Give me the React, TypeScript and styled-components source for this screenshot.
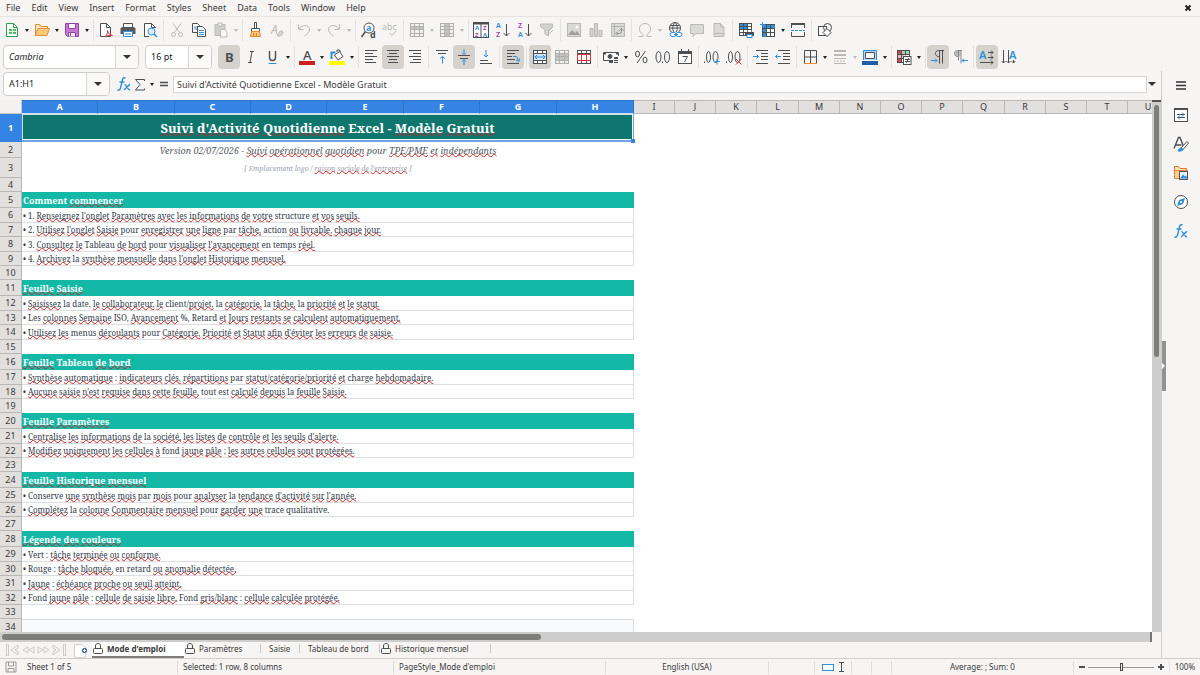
import React, { Fragment, ReactNode } from "react";
import styled, { createGlobalStyle, css } from "styled-components";

const ink = "#4b4f52";
const dim = "#b9b9b8";
const blue = "#2f8fd8";
const select = "#3584e4";

const GlobalStyle = createGlobalStyle`
  * { box-sizing: border-box; }
  html, body { margin: 0; height: 100%; }
  body {
    background: #f6f5f4;
    color: #3a3a3a;
    font-family: "Noto Sans", "Open Sans", sans-serif;
    font-size: 9px;
    line-height: 12px;
    overflow: hidden;
  }
  button, input { font: inherit; color: inherit; }
  button { border: 0; padding: 0; background: none; }
`;

const Window = styled.div`
  display: flex;
  flex-direction: column;
  height: 100vh;
`;

/* ---------- menu bar ---------- */

const MenuBar = styled.nav`
  display: flex;
  flex: none;
  align-items: center;
  gap: 1px;
  height: 17px;
  padding: 0 6px 0 1px;
  border-bottom: 1px solid #e6e5e4;
`;

const MenuItem = styled.button`
  padding: 0 5px;
  line-height: 16px;
`;

const CloseButton = styled.button`
  margin-left: auto;
  width: 10px;
  height: 12px;
  display: flex;
  align-items: center;
`;

/* ---------- toolbars ---------- */

const Toolbar = styled.div<{ $inset?: number; $height: number }>`
  display: flex;
  flex: none;
  align-items: center;
  height: ${(p) => p.$height}px;
  padding-left: ${(p) => p.$inset ?? 1}px;
`;

const ToolButton = styled.button<{ $on?: boolean }>`
  flex: none;
  display: flex;
  align-items: center;
  justify-content: center;
  width: 22px;
  height: 24px;
  border-radius: 4px;
  background: ${(p) => (p.$on ? "#d5d1cd" : "none")};
`;

const ArrowButton = styled.button<{ $dim?: boolean }>`
  flex: none;
  display: flex;
  align-items: center;
  justify-content: center;
  width: 8px;
  height: 24px;
  &::before {
    content: "";
    border: 2px solid transparent;
    border-top: 3px solid ${(p) => (p.$dim ? dim : "#222")};
    border-bottom: 0;
  }
`;

const Divider = styled.span`
  flex: none;
  width: 5px;
  height: 22px;
  background: linear-gradient(#e2e1df, #e2e1df) 2px 0 / 1px 100% no-repeat;
  ${ArrowButton} + & { width: 4px; }
`;

const Combo = styled.div<{ $width: number }>`
  flex: none;
  display: flex;
  width: ${(p) => p.$width}px;
  height: 24px;
  margin-right: 6px;
  border: 1px solid #cfccc9;
  border-radius: 4px;
  background: #fff;
  overflow: hidden;
`;

const ComboInput = styled.input<{ $italic?: boolean }>`
  flex: 1;
  min-width: 0;
  border: 0;
  padding: 0 5px;
  background: none;
  font-size: 9px;
  font-style: ${(p) => (p.$italic ? "italic" : "normal")};
  color: #222;
`;

const ComboArrow = styled.button`
  width: 23px;
  border-left: 1px solid #d9d6d3;
  background: #faf9f8;
  display: flex;
  align-items: center;
  justify-content: center;
  &::before {
    content: "";
    border: 4px solid transparent;
    border-top-color: #333;
    border-bottom: 0;
  }
`;

/* ---------- work area ---------- */

const WorkArea = styled.div`
  flex: 1;
  min-height: 0;
  display: flex;
`;

const Document = styled.main`
  flex: 1;
  min-width: 0;
  display: flex;
  flex-direction: column;
  border-right: 1px solid #d0cfce;
`;

const FormulaBar = styled.div`
  flex: none;
  display: flex;
  align-items: center;
  height: 29px;
  padding: 0 4px 3px 3px;
`;

const FormulaButton = styled.button`
  width: 16px;
  height: 20px;
  display: flex;
  align-items: center;
  justify-content: center;
`;

const FormulaInput = styled.input`
  flex: 1;
  min-width: 0;
  height: 17px;
  margin-left: 1px;
  padding: 0 3px;
  border: 1px solid #d6d4d2;
  background: #fff;
`;

const ExpandButton = styled(ComboArrow)`
  width: 10px;
  height: 16px;
  border: 0;
  background: none;
`;

const GridArea = styled.div`
  flex: 1;
  min-height: 0;
  display: flex;
`;

const Cells = styled.div`
  flex: 1;
  min-width: 0;
  overflow: hidden;
  background: #fff;
`;

const Sheet = styled.table`
  table-layout: fixed;
  width: 1168px;
  border-collapse: separate;
  border-spacing: 0;
`;

const ColumnHead = styled.th<{ $selected?: boolean }>`
  height: 14px;
  padding: 0;
  line-height: 12px;
  border: solid #b9b8b7;
  border-width: 1px 1px 1px 0;
  background: #e1e0df;
  font-weight: 400;
  ${(p) => p.$selected && css`
    background: ${select};
    border-color: #2f74cb;
    border-bottom-color: #cfe0f7;
    color: #fff;
    font-weight: 700;
  `}
`;

const Corner = styled.td`
  padding: 0;
  background: #f3f2f1;
  border: solid #c9c8c7;
  border-width: 0 1px 1px 0;
`;

const RowHead = styled.th<{ $selected?: boolean }>`
  padding: 0;
  line-height: 12px;
  border: solid #b9b8b7;
  border-width: 0 1px 1px 0;
  background: #e1e0df;
  font-weight: 400;
  ${(p) => p.$selected && css`
    background: ${select};
    border-color: ${select};
    color: #fff;
    font-weight: 700;
  `}
`;

type Kind = "title" | "version" | "logo" | "blank" | "head" | "item" | "foot";

const kindStyle = {
  title: css`
    position: relative;
    background: #0f766e;
    color: #fff;
    font-size: 13px;
    font-weight: 700;
    text-align: center;
    border: solid #6fa3e4;
    border-width: 0 1px 2px 0;
    box-shadow: inset -1px -1px #fff, inset 1px 1px #cfe3e1;
  `,
  version: css`
    font-size: 9px;
    font-style: italic;
    text-align: center;
    color: #555b63;
  `,
  logo: css`
    font-size: 7px;
    font-style: italic;
    text-align: center;
    color: #9ca3af;
  `,
  blank: css``,
  head: css`
    background: #14b8a6;
    color: #fff;
    font-size: 9px;
    font-weight: 700;
  `,
  item: css`
    border: solid #dcdfe2;
    border-width: 0 1px 1px 0;
    color: #333b47;
  `,
  foot: css`
    background: #f8fafc;
    border: solid #dcdfe2;
    border-width: 1px 1px 0 0;
  `,
};

const Cell = styled.td<{ $kind: Kind }>`
  padding: 1px 1px 0;
  font-family: "Noto Serif", "Liberation Serif", serif;
  font-size: 8px;
  line-height: 12px;
  white-space: nowrap;
  ${(p) => kindStyle[p.$kind]}
`;

const Misspelt = styled.span`
  text-decoration: underline wavy #d01f1f 1px;
  text-decoration-skip-ink: none;
  text-underline-offset: -1px;
`;

const FillHandle = styled.i`
  position: absolute;
  right: -2px;
  bottom: -3px;
  width: 4px;
  height: 4px;
  background: ${select};
`;

const VScroll = styled.div`
  flex: none;
  width: 9px;
  background: #cdcdcd;
  border-top: 2px solid #555;
  padding: 3px 2px;
`;

const VThumb = styled.div`
  width: 5px;
  height: 48%;
  border-radius: 3px;
  background: #7d7d7c;
`;

const HScroll = styled.div`
  flex: none;
  height: 10px;
  margin-right: 9px;
  padding: 2px;
  background: #cdcdcd;
  border-right: 2px solid #777;
`;

const HThumb = styled.div`
  width: 47%;
  height: 6px;
  border-radius: 3px;
  background: #7d7d7c;
`;

/* ---------- sheet tabs ---------- */

const TabBar = styled.div`
  flex: none;
  display: flex;
  align-items: stretch;
  height: 16px;
  padding-left: 6px;
`;

const TabTool = styled.button`
  display: flex;
  align-items: center;
`;

const Tab = styled.button<{ $active?: boolean; $locked?: boolean; $width: number }>`
  flex: none;
  display: flex;
  align-items: center;
  gap: 4px;
  width: ${(p) => p.$width}px;
  padding: 0 0 1px ${(p) => (p.$locked ? 1 : 8)}px;
  border-bottom: 2px solid transparent;
  font-size: 8px;
  ${(p) => p.$active && css`
    background: #fff;
    border-bottom-color: #7d7d7c;
    font-weight: 700;
  `}
`;

const TabEdge = styled.i`
  width: 1px;
  height: 9px;
  margin-left: auto;
  background: #c9c8c6;
`;

/* ---------- sidebar ---------- */

const Sidebar = styled.aside`
  flex: none;
  position: relative;
  display: flex;
  flex-direction: column;
  align-items: center;
  width: 38px;
`;

const DeckButton = styled.button`
  display: flex;
  align-items: center;
  justify-content: center;
  width: 26px;
  height: 29px;
`;

const Splitter = styled.button`
  position: absolute;
  left: 0;
  top: 46%;
  width: 4px;
  height: 50px;
  display: flex;
  align-items: center;
  background: #929291;
  &::before {
    content: "";
    border: 3px solid transparent;
    border-left-color: #fff;
    border-right: 0;
  }
`;

/* ---------- status bar ---------- */

const StatusBar = styled.footer`
  flex: none;
  display: flex;
  align-items: center;
  height: 17px;
  border-top: 1px solid #d0cfce;
  font-size: 8px;
`;

const StatusField = styled.div<{ $basis: number; $center?: boolean; $grow?: boolean }>`
  flex: ${(p) => (p.$grow ? "1 1" : "0 0")} ${(p) => p.$basis}px;
  display: flex;
  align-items: center;
  gap: 10px;
  justify-content: ${(p) => (p.$center ? "center" : "flex-start")};
  height: 13px;
  padding: 0 5px;
  border-right: 1px solid #dddcda;
  white-space: nowrap;
`;

const ZoomControl = styled.div`
  flex: none;
  display: flex;
  align-items: center;
  justify-content: space-between;
  width: 95px;
  padding: 0 4px;
`;

const ZoomSlider = styled.input`
  appearance: none;
  width: 66px;
  height: 10px;
  margin: 0;
  background: linear-gradient(#999, #999) 0 5px / 100% 1px no-repeat;
  &::-webkit-slider-thumb {
    appearance: none;
    width: 3px;
    height: 8px;
    border: 1px solid #444;
    background: #f6f5f4;
  }
`;

const ZoomValue = styled.button`
  width: 32px;
  border-left: 1px solid #e6e5e4;
`;

/* ---------- icons ---------- */

const Drawing = styled.svg`
  display: block;
  flex: none;
  overflow: visible;
`;

const Icon = ({ children, w = 16, h = 16 }: { children: ReactNode; w?: number; h?: number }) => (
  <Drawing width={w} height={h} viewBox={`0 0 ${w} ${h}`} fill="none" stroke={ink} strokeWidth="1" aria-hidden="true">
    {children}
  </Drawing>
);

const Glyph = styled.text`
  font-family: "Noto Sans", sans-serif;
  stroke: none;
`;

const lines = (rows: [number, number][]) =>
  rows.map(([x, w], i) => <path key={i} d={`M${x} ${i * 3 + 1.5}h${w}`} />);

const TableIcon = ({ band }: { band: string }) => (
  <Icon>
    <rect x="1.5" y="1.5" width="13" height="13" fill="#f0f0ef" stroke="#b0b0af" />
    <path d={band} fill="#c4c4c3" stroke="none" />
    <path d="M1.5 4.5h13M1.5 7.5h13M1.5 11.5h13M5.5 1.5v13M10.5 1.5v13" stroke="#b0b0af" />
  </Icon>
);

const icons: Record<string, ReactNode> = {
  new: (
    <Icon>
      <path d="M2.5 1.5h7l4 4v9h-11z" stroke="#2f9e4f" fill="#fff" />
      <path d="M9.5 1.5v4h4" stroke="#2f9e4f" />
      <path d="M5 7h7v5H5z" fill="#57b56c" stroke="none" />
      <path d="M5 9.5h7M8.5 7v5" stroke="#e5f5e8" />
    </Icon>
  ),
  open: (
    <Icon>
      <path d="M1.5 13.5v-11h4l1.5 2h6.5v2" stroke="#dd8a2a" fill="#fbe3bd" />
      <path d="M1.5 13.5l2.5-7h11.5l-2.5 7z" stroke="#e5933b" fill="#fcc777" />
    </Icon>
  ),
  save: (
    <Icon>
      <path d="M1.5 1.5h13v13h-11l-2-2z" fill="#c27bd0" stroke="#9440a8" />
      <path d="M4.5 1.5h7v5h-7z" fill="#fbf3fc" stroke="#9440a8" />
      <path d="M4.5 14.5v-4h7v4" fill="#fbf3fc" stroke="#9440a8" />
      <path d="M6.5 11v3" stroke="#9440a8" />
    </Icon>
  ),
  pdf: (
    <Icon>
      <path d="M2.5 1.5h6l4 4v9h-10z" fill="#fff" />
      <path d="M8.5 1.5v4h4" />
      <path d="M7.5 14.5c1.5-2 2.5-4 2-6 1 3 2.5 5 5 5-2.500-.5-5 0-7 1z" fill="#fff" stroke="#e0323c" />
    </Icon>
  ),
  print: (
    <Icon>
      <path d="M3.5 1.5h9v4h-9z" fill="#fff" />
      <path d="M2 5h12l1.5 1.5V12H.5V6.5z" fill="#555a5e" stroke="none" />
      <path d="M3.5 9.5h9v5h-9z" fill="#fff" stroke={blue} />
      <path d="M5 12h6" stroke={blue} />
    </Icon>
  ),
  preview: (
    <Icon>
      <path d="M13.5 6v-.5l-4-4h-7v13H7M9.5 1.5v4h4" fill="#fff" />
      <circle cx="9.5" cy="9.5" r="3.5" stroke={blue} fill="#d9edfb" />
      <path d="M12 12l3 3" stroke={blue} strokeWidth="1.5" />
    </Icon>
  ),
  cut: (
    <Icon>
      <path d="M4 1.5l6.5 9M12 1.5l-6.5 9" stroke={dim} />
      <circle cx="4.5" cy="12.5" r="2" stroke={dim} />
      <circle cx="11.5" cy="12.5" r="2" stroke={dim} />
    </Icon>
  ),
  copy: (
    <Icon>
      <path d="M1.5 1.5h5l2 2v7h-7z" fill="#fff" />
      <path d="M3 5h4M3 7h3" stroke={blue} />
      <path d="M6.5 4.5h5l3 3v7h-8z" fill="#fff" />
      <path d="M8 8.5h5M8 10.5h5M8 12.5h5" stroke={blue} />
    </Icon>
  ),
  paste: (
    <Icon>
      <path d="M2 2.5h10v11H2z" fill="#cfcfce" stroke={dim} />
      <path d="M5 1h4v3H5z" fill="#f6f5f4" stroke={dim} />
      <path d="M7.5 7.5h4l2.5 2.5v5H7.5z" fill="#f9f9f9" stroke={dim} />
    </Icon>
  ),
  clone: (
    <Icon>
      <path d="M7.5.5h2v6h-2zM4.5 6.5h8v3h-8z" fill="#fff" />
      <path d="M4.5 9.5h8l1 5h-10z" fill="#fbc27c" stroke="#e88a2d" />
      <path d="M6.5 11v3M9.5 11v3" stroke="#e88a2d" />
    </Icon>
  ),
  clear: (
    <Icon>
      <Glyph x="2" y="12" fontSize="12" fontStyle="italic" fill={dim}>A</Glyph>
      <path d="M8 13l4-4.5 2.5 2-3 3.500H9z" fill="#d5d5d4" stroke={dim} />
    </Icon>
  ),
  undo: (
    <Icon>
      <path d="M2.5 2.5v5h5M3 7c3-5 10-4 10.5 0 .2 3-2 5-5 7" stroke={dim} />
    </Icon>
  ),
  redo: (
    <Icon>
      <path d="M13.5 2.5v5h-5M13 7c-3-5-10-4-10.5 0-.2 3 2 5 5 7" stroke={dim} />
    </Icon>
  ),
  find: (
    <Icon>
      <circle cx="9" cy="6" r="5" fill="#fff" />
      <path d="M5.5 9.5L1.5 15" strokeWidth="1.5" />
      <Glyph x="6" y="9" fontSize="9" fontWeight="700" fill={blue}>a</Glyph>
      <Glyph x="10" y="16" fontSize="9" fontWeight="700" fill={ink}>d</Glyph>
    </Icon>
  ),
  spell: (
    <Icon>
      <Glyph x="0" y="8" fontSize="9" fill={dim}>abc</Glyph>
      <path d="M7.5 11l2.5 2.5 4.5-5" stroke={dim} />
    </Icon>
  ),
  row: <TableIcon band="M2 5h12v3H2z" />,
  column: <TableIcon band="M6 2h4v12H6z" />,
  sort: (
    <Icon>
      <rect x=".5" y=".5" width="15" height="15" fill="#fff" />
      <path d="M0 1.5h16" strokeWidth="2" />
      <path d="M8 2v14" />
      <Glyph x="2" y="8" fontSize="6" fontWeight="700" fill={blue}>A</Glyph>
      <Glyph x="2" y="15" fontSize="6" fontWeight="700" fill="#a13fb5">Z</Glyph>
      <Glyph x="10" y="8" fontSize="6" fontWeight="700" fill="#a13fb5">Z</Glyph>
      <Glyph x="10" y="15" fontSize="6" fontWeight="700" fill={blue}>A</Glyph>
    </Icon>
  ),
  asc: (
    <Icon>
      <Glyph x="1" y="6" fontSize="7" fontWeight="600" fill={blue}>A</Glyph>
      <Glyph x="1" y="15" fontSize="7" fontWeight="600" fill="#a13fb5">Z</Glyph>
      <path d="M11.5 2v12M8.5 11l3 3 3-3" />
    </Icon>
  ),
  desc: (
    <Icon>
      <Glyph x="1" y="6" fontSize="7" fontWeight="600" fill="#a13fb5">Z</Glyph>
      <Glyph x="1" y="15" fontSize="7" fontWeight="600" fill={blue}>A</Glyph>
      <path d="M11.5 2v12M8.5 11l3 3 3-3" />
    </Icon>
  ),
  filter: (
    <Icon>
      <path d="M1.5 2h12v2.5L9.5 8v6L6 12V8L1.5 4.5z" fill="#d3d3d2" stroke={dim} />
      <path d="M10 9l4-4M10 12l4-4" stroke={dim} />
    </Icon>
  ),
  image: (
    <Icon>
      <rect x="1.5" y="1.5" width="13" height="13" fill="#d9d9d8" stroke={dim} />
      <path d="M2 13l4-5 3 3 2-2 3 4z" fill="#9f9f9e" stroke="none" />
      <circle cx="11" cy="5" r="1.5" fill="#fff" stroke="none" />
    </Icon>
  ),
  chart: (
    <Icon>
      <path d="M2 6.5h3v8H2zM6.5 1.5h3v13h-3zM11 8.5h3v6h-3z" fill="#d3d3d2" stroke={dim} />
    </Icon>
  ),
  pivot: (
    <Icon>
      <rect x="1.5" y="1.5" width="13" height="13" fill="#d9d9d8" stroke={dim} />
      <path d="M1.5 4.5h13M4.5 1.5v13" stroke="#b4b4b3" />
      <path d="M6.5 11.5h3c2 0 2-1 2-5M9.5 8.5l2-2 2 2M8 9.5l-2 2 2 2" stroke="#8f8f8e" />
    </Icon>
  ),
  omega: (
    <Icon>
      <path d="M1.5 14.5H6v-2C0 9 2 1.5 8 1.5s8 7.500 2 11v2h4.5" stroke={dim} />
    </Icon>
  ),
  link: (
    <Icon>
      <circle cx="8" cy="6" r="5.5" />
      <path d="M3 6h10M8 .5c-3 3-3 8 0 11M8 .5c3 3 3 8 0 11M3.5 3.5h9" />
      <path d="M1 10h14v5H1z" fill="#f6f5f4" stroke="none" />
      <rect x="3" y="10.5" width="6" height="4" rx="2" stroke={blue} />
      <rect x="9" y="10.5" width="6" height="4" rx="2" stroke={blue} />
      <path d="M7 12.5h4" stroke={blue} />
    </Icon>
  ),
  comment: (
    <Icon>
      <path d="M1.5 2.5h13v9H7l-3 3v-3H1.5z" fill="#dadad9" stroke={dim} />
    </Icon>
  ),
  header: (
    <Icon>
      <path d="M3 1.5h6.5L13 5v9.5H3z" fill="#dadad9" stroke={dim} />
      <path d="M9.5 1.5V5H13M3 11.5h10" stroke={dim} />
    </Icon>
  ),
  printRange: (
    <Icon>
      <rect x="1.5" y="1.5" width="12" height="12" fill="#fff" />
      <path d="M2 2h8v5H2z" fill={blue} stroke="none" />
      <path d="M1.5 4.5h12M1.5 7.5h12M1.5 10.5h12M5.5 1.5v12M9.5 1.5v12" />
      <path d="M7 10h9v4H7z" fill={ink} stroke="none" />
      <path d="M9.5 9h4" stroke="#fff" />
      <path d="M9 12.5h5v3H9z" fill="#fff" stroke={blue} />
    </Icon>
  ),
  freeze: (
    <Icon>
      <rect x="2.5" y="2.5" width="12" height="12" fill="#fff" />
      <path d="M3 3h12v3H3zM3 3h3v12H3z" fill={blue} stroke="none" />
      <path d="M2.5 6.5h12M2.5 10.5h12M6.5 2.5v12M10.5 2.5v12" />
      <path d="M0 2.5h5M2.5 0v5" stroke={blue} />
    </Icon>
  ),
  split: (
    <Icon>
      <path d="M1.5 6V1.5h13V6M1.5 10v4.5h13V10" />
      <path d="M1 2h14" strokeWidth="2" />
      <path d="M1 8.5h14" stroke={blue} strokeDasharray="3 1" />
    </Icon>
  ),
  shapes: (
    <Icon>
      <rect x="1.5" y="4.5" width="8" height="9" />
      <circle cx="10.5" cy="5.5" r="4" />
      <path d="M10 6.5l4 4-4 4-4-4z" fill="#fff" />
    </Icon>
  ),
  bold: <Icon><Glyph x="4" y="13" fontSize="13" fontWeight="700" fill={ink}>B</Glyph></Icon>,
  italic: <Icon><path d="M7 2.5h4M5 13.5h4M9 2.5l-2 11" /></Icon>,
  underline: (
    <Icon>
      <path d="M4.5 2v6.5c0 4 6 4 6 0V2" strokeWidth="1.4" />
      <path d="M3.5 14.5h8" stroke={blue} />
    </Icon>
  ),
  fontColor: (
    <Icon>
      <Glyph x="4" y="11" fontSize="13" fontWeight="500" fill={ink}>A</Glyph>
      <path d="M0 12h16v4H0z" fill="#c9211e" stroke="none" />
    </Icon>
  ),
  highlight: (
    <Icon>
      <path d="M0 12h16v4H0z" fill="#ffff00" stroke="none" />
      <path d="M2.5 10V3.5h4" stroke={blue} strokeWidth="2" />
      <path d="M5.5 6l5-3.500 3.5 5-5 3.500zM8 3V1h2.500l1 2" fill="#fff" />
    </Icon>
  ),
  left: <Icon>{lines([[2, 12], [2, 8], [2, 12], [2, 8], [2, 11]])}</Icon>,
  center: <Icon>{lines([[2, 12], [4, 8], [2, 12], [4, 8], [3, 10]])}</Icon>,
  right: <Icon>{lines([[2, 12], [6, 8], [2, 12], [6, 8], [3, 11]])}</Icon>,
  top: (
    <Icon>
      <path d="M2 1.5h12M4 4.5h8" />
      <path d="M8.5 14.5v-7M6 9.5l2.5-2 2.5 2" stroke={blue} />
    </Icon>
  ),
  middle: (
    <Icon>
      <path d="M2 6.5h12M4 9.5h8" />
      <path d="M8 0v5M6 3.5l2 2 2-2M8 16v-5M6 12.5l2-2 2 2" stroke={blue} />
    </Icon>
  ),
  bottom: (
    <Icon>
      <path d="M2 11.5h8M2 14.5h12" />
      <path d="M8 1v6.5M6 6l2 2 2-2" stroke={blue} />
    </Icon>
  ),
  wrap: (
    <Icon>
      <path d="M2 1.5h12M2 4.5h8M2 7.5h5M2 10.5h8M2 14.5h12" />
      <path d="M8 7.5h3.5l2 4M11 11l3 1.5.5-3" stroke={blue} />
    </Icon>
  ),
  merge: (
    <Icon>
      <rect x="1.5" y="1.5" width="13" height="13" fill="#fff" />
      <path d="M1.5 4.5h13M1.5 11.5h13M5.5 1.5v3M10.5 1.5v3M5.5 11.5v3M10.5 11.5v3" />
      <path d="M2 5h12v6H2z" fill="#cfe6f8" stroke="none" />
      <path d="M2.5 8h11M5 6L3 8l2 2M11 6l2 2-2 2" stroke={blue} />
    </Icon>
  ),
  mergeAll: <TableIcon band="M2 5h12v6H2z" />,
  unmerge: (
    <Icon>
      <rect x="1.5" y="1.5" width="13" height="13" fill="#fff" />
      <path d="M1.5 4.5h13M5.5 1.5v3M10.5 1.5v3M5.5 11.5v3M10.5 11.5v3" />
      <path d="M1.5 5.5h13v6h-13zM5.5 5.5v6M10.5 5.5v6" stroke="#e0323c" />
    </Icon>
  ),
  currency: (
    <Icon>
      <path d="M8 11.5H.5v-8h15V7" fill="#fff" />
      <circle cx="7" cy="7.5" r="2" fill={ink} />
      <path d="M1 4h2v1.5H1zM13 4h2v1.5h-2z" fill={ink} stroke="none" />
      <path d="M6 11h4v3H6zM11 8h4v6h-4z" fill={ink} stroke="none" />
      <path d="M11 10.5h4M11 12.5h4" stroke="#eee" />
    </Icon>
  ),
  percent: (
    <Icon>
      <path d="M12.5 2L4 14" />
      <ellipse cx="4.5" cy="5" rx="2" ry="2.8" />
      <ellipse cx="12" cy="11" rx="2" ry="2.8" />
    </Icon>
  ),
  number: (
    <Icon>
      <ellipse cx="3.5" cy="8" rx="2.5" ry="5.5" />
      <ellipse cx="12" cy="8" rx="2.5" ry="5.5" />
      <path d="M7.5 12.5V14" />
    </Icon>
  ),
  date: (
    <Icon>
      <rect x="1.5" y="2.5" width="13" height="12" fill="#fff" />
      <path d="M1.5 4h13" strokeWidth="2" />
      <path d="M4.5 0v3M11.5 0v3M5.5 7.5h5l-3 5.5" />
    </Icon>
  ),
  addDec: (
    <Icon>
      <path d="M.5 12.5V14" />
      <ellipse cx="4.5" cy="8" rx="2" ry="5.5" />
      <ellipse cx="11.5" cy="8" rx="2.5" ry="5.5" />
      <path d="M13 10v5.5M10 12.5h6" stroke={blue} />
    </Icon>
  ),
  delDec: (
    <Icon>
      <path d="M.5 12.5V14" />
      <ellipse cx="4.5" cy="8" rx="2" ry="5.5" />
      <ellipse cx="11.5" cy="8" rx="2.5" ry="5.5" />
      <path d="M10 10l5.5 5.5M15.5 10L10 15.5" stroke="#e0323c" />
    </Icon>
  ),
  indent: (
    <Icon>
      <path d="M3 1.5h12M8 4.5h7M8 7.5h7M8 10.5h7M3 14.5h12" />
      <path d="M0 7.5h5.5M3.5 5.5l2 2-2 2" stroke={blue} />
    </Icon>
  ),
  outdent: (
    <Icon>
      <path d="M3 1.5h12M8 4.5h7M8 7.5h7M8 10.5h7M3 14.5h12" />
      <path d="M.5 7.5H6M2.5 5.5l-2 2 2 2" stroke={blue} />
    </Icon>
  ),
  borders: (
    <Icon>
      <path d="M2.5 14V1.5h12V14M8.5 1.5V14M2.5 8h12" />
      <path d="M2 14.5h13" stroke="#e88a2d" />
    </Icon>
  ),
  lineStyle: (
    <Icon>
      <path d="M2 2h12M2 6h12" stroke={dim} strokeWidth="2" />
      <path d="M2 9.5h12M2 14.5h12" stroke={dim} />
      <path d="M2 12h12" stroke={dim} strokeDasharray="2 1" />
    </Icon>
  ),
  borderColor: (
    <Icon>
      <path d="M1.5 11V1.5h13V11" fill="#b7d9f3" stroke={blue} />
      <path d="M3.5 3.5h9v6h-9z" fill="#fff" />
      <path d="M0 12h16v4H0z" fill="#1f5fa8" stroke="none" />
    </Icon>
  ),
  conditional: (
    <Icon>
      <rect x="1.5" y="1.5" width="12" height="12" fill="#fff" />
      <path d="M2 2h4v4H2zM2 10h4v3H2z" fill="#e0444b" stroke="none" />
      <path d="M6 2h7v4H6z" fill="#a5dab0" stroke="none" />
      <path d="M2 6h6v3H2z" fill="#f2b8ba" stroke="none" />
      <path d="M1.5 5.5h12M1.5 9.5h6M5.5 1.5v12M9.5 1.5v5" />
      <rect x="7.5" y="7.5" width="7.5" height="8" fill="#fff" />
      <path d="M9 10.5h5M9 12.5h5M12.5 9l-2 5" />
    </Icon>
  ),
  ltr: (
    <Icon>
      <path d="M14 1.5H8.5c-4 0-4 6 0 6h1M9.5 1.5v13M12.5 1.5v13" />
      <path d="M1 11.5h6M5 9.5l2 2-2 2" stroke={blue} />
    </Icon>
  ),
  rtl: (
    <Icon>
      <path d="M5.5 1.5c-4 0-4 6 0 6h3v-6z" fill="#bbb" stroke="none" />
      <path d="M10 1.5H5.5c-4 0-4 6 0 6h1M6.5 1.5v10M9 1.5v13" stroke="#8b8b8a" />
      <path d="M10 11.5h6M12 9.5l-2 2 2 2" stroke={blue} />
    </Icon>
  ),
  horizontal: (
    <Icon>
      <Glyph x="0" y="10" fontSize="11" fontWeight="600" fill={blue}>A</Glyph>
      <path d="M9 3.5h5M9 8.5h5M1 13.5h13M12 1.5l2 2-2 2M12 6.5l2 2-2 2M12 11.5l2 2-2 2" />
    </Icon>
  ),
  vertical: (
    <Icon>
      <Glyph x="8" y="10" fontSize="11" fontWeight="600" fill={blue}>A</Glyph>
      <path d="M2.5 1v13M7.5 1v13M12.5 11v3M.5 12l2 2 2-2M5.5 12l2 2 2-2M10.5 12l2 2 2-2" />
    </Icon>
  ),
  fx: (
    <Icon>
      <path d="M9.5 2C7 1 6.5 3 6 6l-1.5 6c-.5 2-1.500 2.500-3 2M3.5 6h5" stroke={blue} strokeWidth="1.4" />
      <path d="M8.5 8.5c2 0 2.500 5 5.500 5.500M14 8.5c-2 1-4 4-6 5.500" stroke={blue} strokeWidth="1.4" />
    </Icon>
  ),
  sum: <Icon w={12}><path d="M10.5 5V3.500h-9l4.500 5-4.500 5.500h9v-1.500" /></Icon>,
  equals: <Icon w={10}><path d="M1 6.5h8M1 9.5h8" strokeWidth="1.5" /></Icon>,
  close: <Icon w={8} h={8}><path d="M1.5 1.5l5 5M6.5 1.5l-5 5" stroke="#222" strokeWidth="2" /></Icon>,
  menu: <Icon><path d="M3 4h10M3 7.5h10M3 11h10" stroke="#333" strokeWidth="1.4" /></Icon>,
  properties: (
    <Icon>
      <rect x="1.5" y="1.5" width="13" height="13" fill="#fff" />
      <path d="M1 2h14" strokeWidth="2" />
      <path d="M4 7.5h8M4 10.5h8" />
      <path d="M9 5.5l2 2-2 2M7 8.5l-2 2 2 2" stroke={blue} />
    </Icon>
  ),
  styles: (
    <Icon>
      <path d="M1 12.5l4.500-11H7l3.500 9M2.5 9h6" strokeWidth="1.4" />
      <path d="M8 12l6-6.500L15.500 7 10 13.500z" fill="#fff" />
      <path d="M5 15c1-3 3-3.500 4.500-2S8 15.500 5 15z" fill={blue} stroke={blue} />
    </Icon>
  ),
  gallery: (
    <Icon>
      <path d="M1.5 13.5v-12h4l1.500 2h6.500v2" stroke="#dd7a2a" fill="#fbe3bd" />
      <path d="M1.5 13.5v-8h13v8z" stroke="#e5833b" fill="#fcd08c" />
      <path d="M6.5 6.5h8v8h-8z" fill="#e4f2fc" />
      <path d="M7 13.5l3-4 2 2 1-1 1.500 3z" fill={blue} stroke="none" />
    </Icon>
  ),
  navigator: (
    <Icon>
      <circle cx="8" cy="8" r="6.5" fill="#fff" />
      <path d="M12 4l-2 6-6 2 2-6z" fill={blue} stroke="none" />
      <circle cx="8" cy="8" r="1" fill="#fff" stroke="none" />
    </Icon>
  ),
  lock: (
    <Icon w={10} h={13}>
      <rect x=".5" y="6.5" width="9" height="5" rx="1" />
      <path d="M2.500 6.5V4c0-3.500 5-3.500 5 0v2.500" />
    </Icon>
  ),
  saved: (
    <Icon w={12} h={12}>
      <path d="M1 1h10v10H1zM3.5 1v4h5V1M3 11V7.5h6V11" stroke="#9b9b9a" />
    </Icon>
  ),
};

const A = "arrow";
const DA = "dim-arrow";
const S = "divider";

const standardTools = [
  "new", A, "open", A, "save", A, S, "pdf", "print", "preview", S, "cut", "copy", "paste", DA, S,
  "clone", "clear", S, "undo", DA, "redo", DA, S, "find", "spell", S, "row", DA, "column", DA, S,
  "sort", "asc", "desc", "filter", S, "image", "chart", "pivot", S, "omega", DA, "link", "comment",
  "header", S, "printRange", "freeze", A, "split", S, "shapes",
];

const formatTools = [
  "bold", "italic", "underline", A, S, "fontColor", A, "highlight", A, S, "left", "center", "right", S,
  "top", "middle", "bottom", S, "wrap", S, "merge", "mergeAll", "unmerge", S, "currency", A, "percent",
  "number", "date", S, "addDec", "delDec", S, "indent", "outdent", S, "borders", A, "lineStyle", DA,
  "borderColor", A, S, "conditional", A, S, "ltr", "rtl", S, "horizontal", "vertical",
];

const pressed = new Set(["bold", "center", "middle", "wrap", "merge", "ltr", "horizontal"]);

const Tools = ({ names }: { names: string[] }) => (
  <>
    {names.map((name, i) => {
      if (name === S) return <Divider key={i} />;
      if (name === A || name === DA)
        return <ArrowButton key={i} $dim={name === DA} aria-label={`${names[i - 1]} options`} />;
      return (
        <ToolButton key={i} $on={pressed.has(name)} aria-label={name}>
          {icons[name]}
        </ToolButton>
      );
    })}
  </>
);

/* ---------- sheet content ---------- */

/* Words between tildes are flagged by the spell checker. */
const rows: [Kind, number, string?][] = [
  ["title", 28, "~Suivi~ ~d'Activité~ ~Quotidienne~ Excel - ~Modèle~ ~Gratuit~"],
  ["version", 16, "Version 02/07/2026 - ~Suivi~ ~opérationnel~ ~quotidien~ pour ~TPE/PME~ ~et~ ~indépendants~"],
  ["logo", 20, "[ Emplacement logo / ~raison~ ~sociale~ ~de~ ~l'entreprise~ ]"],
  ["blank", 14],
  ["head", 16, "Comment ~commencer~"],
  ["item", 15, "• 1. ~Renseignez~ ~l'onglet~ ~Paramètres~ ~avec~ ~les~ ~informations~ ~de~ ~votre~ structure ~et~ ~vos~ ~seuils.~"],
  ["item", 14, "• 2. ~Utilisez~ ~l'onglet~ ~Saisie~ pour ~enregistrer~ ~une~ ~ligne~ par ~tâche,~ action ~ou~ ~livrable,~ ~chaque~ ~jour.~"],
  ["item", 15, "• 3. ~Consultez~ ~le~ Tableau ~de~ ~bord~ pour ~visualiser~ ~l'avancement~ en temps ~réel.~"],
  ["item", 14, "• 4. ~Archivez~ la ~synthèse~ ~mensuelle~ ~dans~ ~l'onglet~ ~Historique~ ~mensuel.~"],
  ["blank", 14],
  ["head", 16, "~Feuille~ ~Saisie~"],
  ["item", 15, "• ~Saisissez~ la date, ~le~ ~collaborateur,~ ~le~ client/~projet,~ la ~catégorie,~ la ~tâche,~ la ~priorité~ ~et~ ~le~ ~statut.~"],
  ["item", 14, "• Les ~colonnes~ ~Semaine~ ISO, ~Avancement~ %, Retard ~et~ ~Jours~ ~restants~ ~se~ ~calculent~ ~automatiquement.~"],
  ["item", 15, "• ~Utilisez~ ~les~ menus ~déroulants~ pour ~Catégorie,~ ~Priorité~ ~et~ ~Statut~ ~afin~ ~d'éviter~ ~les~ ~erreurs~ ~de~ ~saisie.~"],
  ["blank", 14],
  ["head", 16, "~Feuille~ Tableau ~de~ ~bord~"],
  ["item", 15, "• ~Synthèse~ ~automatique~ : ~indicateurs~ ~clés,~ ~répartitions~ par ~statut/catégorie/priorité~ ~et~ charge ~hebdomadaire.~"],
  ["item", 14, "• ~Aucune~ ~saisie~ ~n'est~ ~requise~ ~dans~ ~cette~ ~feuille,~ tout est ~calculé~ ~depuis~ la ~feuille~ ~Saisie.~"],
  ["blank", 14],
  ["head", 16, "~Feuille~ ~Paramètres~"],
  ["item", 15, "• ~Centralise~ ~les~ ~informations~ ~de~ la ~société,~ ~les~ ~listes~ ~de~ ~contrôle~ ~et~ ~les~ ~seuils~ ~d'alerte.~"],
  ["item", 14, "• ~Modifiez~ ~uniquement~ ~les~ ~cellules~ ~à~ fond ~jaune~ ~pâle~ ; ~les~ ~autres~ ~cellules~ ~sont~ ~protégées.~"],
  ["blank", 14],
  ["head", 16, "~Feuille~ ~Historique~ ~mensuel~"],
  ["item", 15, "• Conserve ~une~ ~synthèse~ ~mois~ par ~mois~ pour ~analyser~ la ~tendance~ ~d'activité~ ~sur~ ~l'année.~"],
  ["item", 14, "• ~Complétez~ la ~colonne~ ~Commentaire~ ~mensuel~ pour ~garder~ ~une~ trace qualitative."],
  ["blank", 14],
  ["head", 16, "~Légende~ ~des~ ~couleurs~"],
  ["item", 15, "• Vert : ~tâche~ ~terminée~ ~ou~ ~conforme.~"],
  ["item", 14, "• Rouge : ~tâche~ ~bloquée,~ en retard ~ou~ ~anomalie~ ~détectée.~"],
  ["item", 15, "• ~Jaune~ : ~échéance~ ~proche~ ~ou~ ~seuil~ ~atteint.~"],
  ["item", 14, "• Fond ~jaune~ ~pâle~ : ~cellule~ ~de~ ~saisie~ ~libre.~ Fond ~gris/blanc~ : ~cellule~ ~calculée~ ~protégée.~"],
  ["blank", 14],
  ["foot", 16],
];

const columns: [string, number][] = [
  ["A", 76], ["B", 77], ["C", 76], ["D", 76], ["E", 77], ["F", 76], ["G", 77], ["H", 77],
  ["I", 41], ["J", 41], ["K", 41], ["L", 42], ["M", 41], ["N", 41], ["O", 41], ["P", 41],
  ["Q", 42], ["R", 41], ["S", 41], ["T", 41], ["U", 41],
];

const spellChecked = (text: string) =>
  text.split("~").map((part, i) => (i % 2 ? <Misspelt key={i}>{part}</Misspelt> : <Fragment key={i}>{part}</Fragment>));

const tabs: { name: string; width: number; locked?: boolean; active?: boolean }[] = [
  { name: "Mode d'emploi", width: 92, locked: true, active: true },
  { name: "Paramètres", width: 77, locked: true },
  { name: "Saisie", width: 39 },
  { name: "Tableau de bord", width: 80 },
  { name: "Historique mensuel", width: 111, locked: true },
];

const menus = ["File", "Edit", "View", "Insert", "Format", "Styles", "Sheet", "Data", "Tools", "Window", "Help"];

export default function App() {
  return (
    <Window>
      <GlobalStyle />
      <MenuBar>
        {menus.map((m) => (
          <MenuItem key={m}>{m}</MenuItem>
        ))}
        <CloseButton aria-label="Close document">{icons.close}</CloseButton>
      </MenuBar>

      <Toolbar $height={26}>
        <Tools names={standardTools} />
      </Toolbar>
      <Toolbar $height={28} $inset={3}>
        <Combo $width={136}>
          <ComboInput $italic aria-label="Font name" defaultValue="Cambria" />
          <ComboArrow aria-label="Font list" />
        </Combo>
        <Combo $width={67}>
          <ComboInput aria-label="Font size" defaultValue="16 pt" />
          <ComboArrow aria-label="Size list" />
        </Combo>
        <Tools names={formatTools} />
      </Toolbar>

      <WorkArea>
        <Document>
          <FormulaBar>
            <Combo $width={107}>
              <ComboInput aria-label="Name box" defaultValue="A1:H1" />
              <ComboArrow aria-label="Named ranges" />
            </Combo>
            <FormulaButton aria-label="Function wizard">{icons.fx}</FormulaButton>
            <FormulaButton aria-label="Sum">{icons.sum}</FormulaButton>
            <ArrowButton aria-label="Sum options" />
            <FormulaButton aria-label="Formula">{icons.equals}</FormulaButton>
            <FormulaInput aria-label="Input line" defaultValue="Suivi d'Activité Quotidienne Excel - Modèle Gratuit" />
            <ExpandButton aria-label="Expand formula bar" />
          </FormulaBar>

          <GridArea>
            <Cells>
              <Sheet>
                <colgroup>
                  <col width={22} />
                  {columns.map(([name, width]) => (
                    <col key={name} width={width} />
                  ))}
                </colgroup>
                <thead>
                  <tr>
                    <Corner />
                    {columns.map(([name], i) => (
                      <ColumnHead key={name} scope="col" $selected={i < 8}>{name}</ColumnHead>
                    ))}
                  </tr>
                </thead>
                <tbody>
                  {rows.map(([kind, height, text], i) => (
                    <tr key={i} style={{ height }}>
                      <RowHead scope="row" $selected={i === 0}>{i + 1}</RowHead>
                      <Cell $kind={kind} colSpan={8}>
                        {text && spellChecked(text)}
                        {i === 0 && <FillHandle />}
                      </Cell>
                    </tr>
                  ))}
                </tbody>
              </Sheet>
            </Cells>
            <VScroll><VThumb /></VScroll>
          </GridArea>
          <HScroll><HThumb /></HScroll>

          <TabBar>
            <TabTool aria-label="Scroll tabs">
              <svg width="62" height="12" viewBox="0 0 62 12" fill="none" stroke="#cbcac9" aria-hidden="true">
                <path d="M.5 0v12h2V0zM12 1L5 6l7 5V8L9 6l3-2zM22 3l-5 3 5 3zM28 3l-5 3 5 3zM32 3l5 3-5 3zM38 3l5 3-5 3zM47 1l7 5-7 5V8l3-2-3-2zM57.5 0v12h2V0z" />
              </svg>
            </TabTool>
            <TabTool aria-label="Add sheet">
              <svg width="24" height="15" viewBox="0 0 24 15" fill="none" aria-hidden="true">
                <path d="M6.5 1.5h8l3 3v10h-11z" fill="#fff" stroke="#d3d2d1" />
                <circle cx="16.5" cy="7.5" r="2.5" fill="#2c5aa0" />
                <path d="M15 7.5h3M16.5 6v3" stroke="#fff" />
              </svg>
            </TabTool>
            {tabs.map((t) => (
              <Tab key={t.name} $width={t.width} $active={t.active} $locked={t.locked}>
                {t.locked && icons.lock}
                <span>{t.name}</span>
                {!t.active && <TabEdge />}
              </Tab>
            ))}
          </TabBar>
        </Document>

        <Sidebar>
          {["menu", "properties", "styles", "gallery", "navigator", "fx"].map((d) => (
            <DeckButton key={d} aria-label={d}>{icons[d]}</DeckButton>
          ))}
          <Splitter aria-label="Hide sidebar" />
        </Sidebar>
      </WorkArea>

      <StatusBar>
        <StatusField $basis={178}>
          {icons.saved}
          <span>Sheet 1 of 5</span>
        </StatusField>
        <StatusField $basis={216}>Selected: 1 row, 8 columns</StatusField>
        <StatusField $basis={212}>PageStyle_Mode d'emploi</StatusField>
        <StatusField $basis={167} $center $grow>English (USA)</StatusField>
        <StatusField $basis={46} />
        <StatusField $basis={31}>
          <Icon w={26} h={12}>
            <rect x="2.5" y="3.5" width="11" height="6" stroke={blue} fill="#fff" />
            <path d="M19 1.5h5M19 10.5h5M21.5 1.5v9" />
          </Icon>
        </StatusField>
        <StatusField $basis={20} />
        <StatusField $basis={20} />
        <StatusField $basis={182} $center>Average: ; Sum: 0</StatusField>
        <ZoomControl>
          <button aria-label="Zoom out"><Icon w={8} h={8}><path d="M1 4h6" strokeWidth="2" /></Icon></button>
          <ZoomSlider type="range" aria-label="Zoom" defaultValue={50} />
          <button aria-label="Zoom in"><Icon w={8} h={8}><path d="M1 4h6M4 1v6" strokeWidth="2" /></Icon></button>
        </ZoomControl>
        <ZoomValue>100%</ZoomValue>
      </StatusBar>
    </Window>
  );
}
